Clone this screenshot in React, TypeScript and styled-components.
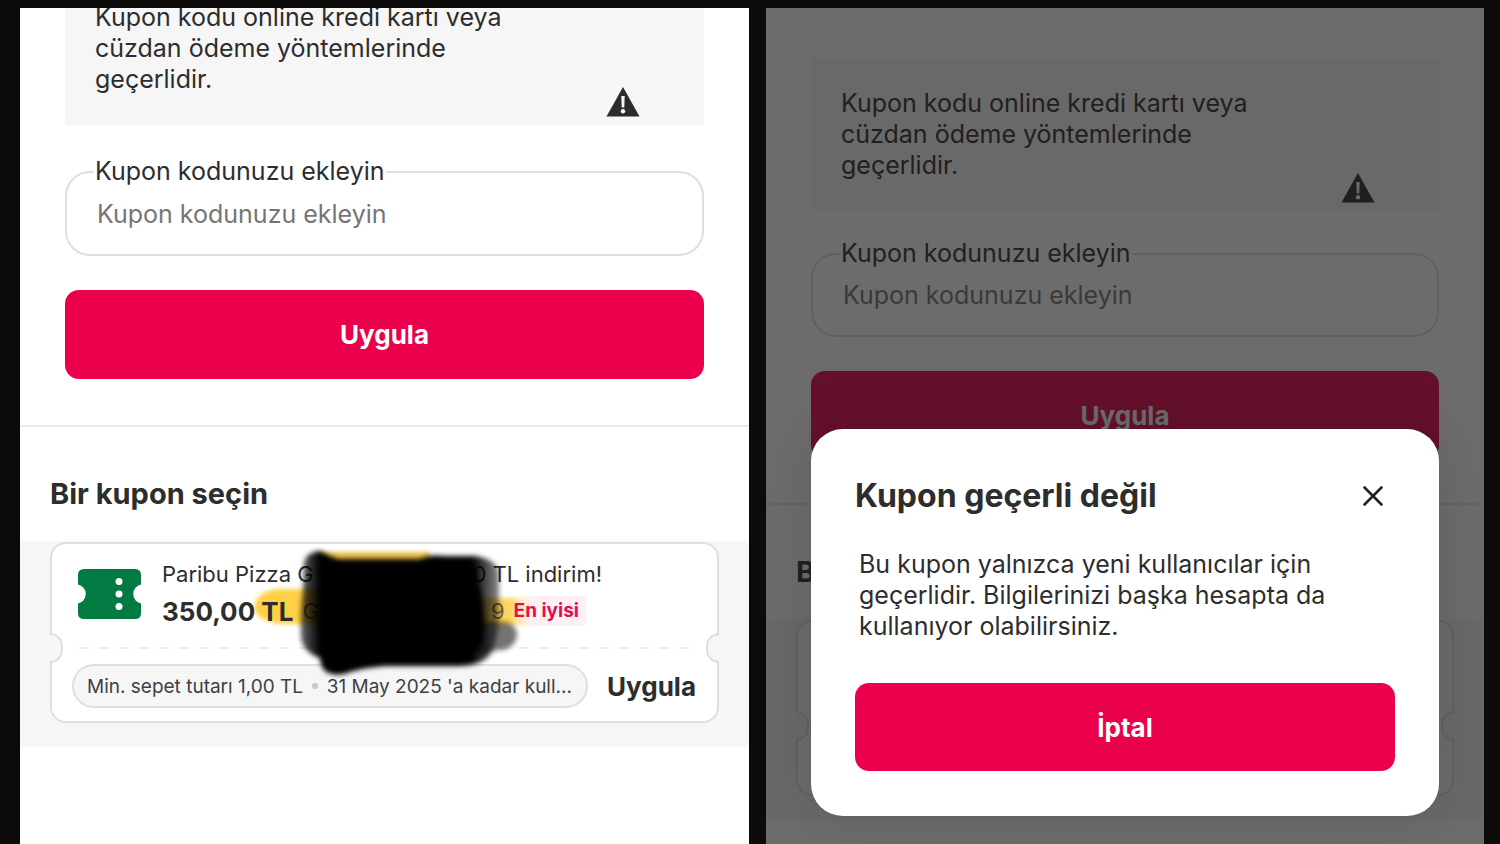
import React, { useId } from 'react';
import styled, { createGlobalStyle, ThemeProvider } from 'styled-components';

const GlobalStyle = createGlobalStyle`
  * { box-sizing: border-box; }
  body {
    margin: 0;
    background: #0c0b09;
    color: #2d2d2d;
    font-family: Inter, "Noto Sans", sans-serif;
  }
  button, input { font-family: inherit; }
  h2, p { margin: 0; }
`;

const regular = {
  noticeOffset: -36,
  noticeGap: 46,
  field: 85,
  fieldGap: 34,
  button: 89,
  sectionGap: 46,
  ticket: 181,
};

const compact = {
  noticeOffset: 50,
  noticeGap: 42,
  field: 84,
  fieldGap: 34,
  button: 88,
  sectionGap: 44,
  ticket: 176,
};

type Sizes = typeof regular;
const size = (key: keyof Sizes) => (p: { theme: any }) => `${p.theme[key]}px`;

const Stage = styled.main`
  display: grid;
  grid-template-columns: 729fr 718fr;
  gap: 17px;
  min-height: 100vh;
  padding: 8px 16px 0 20px;
`;

const Screen = styled.section`
  position: relative;
  overflow: hidden;
  background: #fff;
`;

const Form = styled.form`
  display: flex;
  flex-direction: column;
  padding: 0 45px ${size('sectionGap')};
  border-bottom: 2px solid #ebebeb;
`;

const Notice = styled.div`
  display: flex;
  align-items: flex-end;
  justify-content: space-between;
  margin-top: ${size('noticeOffset')};
  padding: 30px 64px 8px 30px;
  background: #f6f6f6;
`;

const NoticeText = styled.p`
  max-width: 430px;
  padding-bottom: 22px;
  font-size: 25px;
  line-height: 31px;
`;

const Field = styled.div`
  position: relative;
  margin-top: ${size('noticeGap')};
`;

const FieldLabel = styled.label`
  position: absolute;
  top: -15px;
  left: 29px;
  padding: 0 1px;
  background: #fff;
  font-size: 25px;
  line-height: 30px;
`;

const TextInput = styled.input`
  display: block;
  width: 100%;
  height: ${size('field')};
  padding: 0 30px;
  border: 2px solid #dedede;
  border-radius: 25px;
  background: #fff;
  font-size: 25px;
  &::placeholder { color: #757575; opacity: 1; }
`;

const PrimaryButton = styled.button`
  width: 100%;
  height: ${size('button')};
  padding: 0;
  border: 0;
  border-radius: 14px;
  background: #eb004b;
  color: #fff;
  font-size: 26px;
  font-weight: 700;
`;

const SubmitButton = styled(PrimaryButton)`
  margin-top: ${size('fieldGap')};
`;

const SectionTitle = styled.h2`
  padding: 50px 30px 30px;
  font-size: 29px;
  font-weight: 700;
  line-height: 34px;
`;

const TicketStrip = styled.div`
  padding: 1px 30px 24px;
  background: #f6f6f6;
`;

const Ticket = styled.article`
  position: relative;
  min-height: ${size('ticket')};
  border: 2px solid #dfdfdf;
  border-radius: 16px;
  background: #fff;
`;

const Notch = styled.span<{ $side: 'left' | 'right' }>`
  position: absolute;
  top: 89px;
  ${(p) => p.$side}: -2px;
  width: 13px;
  height: 30px;
  border: 2px solid #dfdfdf;
  border-${(p) => p.$side}: 0;
  border-radius: ${(p) => (p.$side === 'left' ? '0 15px 15px 0' : '15px 0 0 15px')};
  background: #f6f6f6;
`;

const Offer = styled.div`
  display: flex;
  gap: 21px;
  padding: 13px 25px 19px;
`;

const TicketIcon = styled.svg`
  flex: none;
  width: 64px;
  height: 50px;
  margin-top: 12px;
`;

const OfferText = styled.div`
  position: relative;
  z-index: 0;
  display: flex;
  flex-direction: column;
  gap: 3px;
  width: 440px;
`;

const OfferRow = styled.div`
  display: flex;
  align-items: center;
  justify-content: space-between;
  height: 34px;
  font-size: 22px;
  white-space: nowrap;
`;

const Group = styled.span`
  display: flex;
  align-items: center;
  gap: 9px;
`;

const Price = styled.strong`
  font-size: 26px;
  font-weight: 700;
`;

const Muted = styled.span`
  color: #6b6144;
`;

const BestTag = styled.strong`
  margin-right: 16px;
  padding: 4px 7px 4px 0;
  border-radius: 4px;
  background: linear-gradient(90deg, transparent, #fff0f5 30%);
  color: #e2104e;
  font-size: 19px;
  font-weight: 700;
  line-height: 22px;
`;

const MarkLayer = styled.svg<{ $layer: number }>`
  position: absolute;
  z-index: ${(p) => p.$layer};
  top: 0;
  left: 0;
  width: 500px;
  height: 140px;
  pointer-events: none;
`;

const Perforation = styled.div`
  height: 2px;
  margin: 0 27px;
  background: repeating-linear-gradient(90deg, #ededed 0 10px, transparent 10px 20px);
`;

const TicketFooter = styled.div`
  display: flex;
  align-items: center;
  justify-content: space-between;
  padding: 15px 21px 13px 20px;
`;

const Terms = styled.p`
  display: flex;
  align-items: center;
  justify-content: space-between;
  width: 516px;
  height: 44px;
  padding: 0 14px 0 13px;
  border: 2px solid #dfdfdf;
  border-radius: 22px;
  background: #f6f6f6;
  color: #404040;
  font-size: 19px;
  white-space: nowrap;
`;

const Dot = styled.i`
  width: 6px;
  height: 6px;
  border-radius: 50%;
  background: #c9c9c9;
`;

const TextButton = styled.button`
  padding: 0;
  border: 0;
  background: none;
  color: #2d2d2d;
  font-size: 26px;
  font-weight: 700;
`;

const Overlay = styled.div`
  position: absolute;
  inset: 0;
  display: flex;
  align-items: flex-end;
  padding: 0 45px 28px;
  background: rgba(25, 25, 25, 0.64);
`;

const Dialog = styled.div`
  flex: 1;
  padding: 45px 44px;
  border-radius: 32px;
  background: #fff;
  box-shadow: 0 0 60px rgba(0, 0, 0, 0.12);
`;

const DialogHeader = styled.header`
  display: flex;
  align-items: center;
  justify-content: space-between;
  padding-right: 11px;
`;

const DialogTitle = styled.h2`
  font-size: 32px;
  font-weight: 700;
  line-height: 44px;
`;

const CloseButton = styled.button`
  display: flex;
  padding: 0;
  border: 0;
  background: none;
  color: #222;
`;

const DialogText = styled.p`
  max-width: 490px;
  padding: 31px 0 41px 4px;
  font-size: 25px;
  line-height: 31px;
`;

function WarningIcon() {
  return (
    <svg width="34" height="30" viewBox="0 0 34 30" aria-hidden="true">
      <path d="M17 0 33.500 29.500H.5Z" fill="#2b2b2b" />
      <path d="M15.300 9h3.400l-.4 11.500h-2.600Z" fill="#f6f6f6" />
      <circle cx="17" cy="24.200" r="2.200" fill="#f6f6f6" />
    </svg>
  );
}

function CouponIcon() {
  return (
    <TicketIcon viewBox="0 0 64 50" aria-hidden="true">
      <path
        d="M7 0H58Q64 0 64 6V15.500A9.700 9.700 0 0 0 64 34.500V44Q64 50 58 50H7Q1 50 1 44V34.500A9.700 9.700 0 0 0 1 15.500V6Q1 0 7 0Z"
        fill="#027a42"
      />
      <circle cx="42" cy="12.500" r="3.500" fill="#fff" />
      <circle cx="42" cy="25" r="3.500" fill="#fff" />
      <circle cx="42" cy="37.500" r="3.500" fill="#fff" />
    </TicketIcon>
  );
}

function Highlighter() {
  return (
    <MarkLayer $layer={-1} viewBox="162 557 500 140" overflow="visible" aria-hidden="true">
      <defs>
        <filter id="soft-yellow" x="-20%" y="-50%" width="140%" height="200%">
          <feGaussianBlur stdDeviation="2" />
        </filter>
        <linearGradient id="yellow-fade" gradientUnits="userSpaceOnUse" x1="508" x2="540" y1="0" y2="0">
          <stop offset="0" stopColor="#ffd35a" />
          <stop offset="1" stopColor="#ffd35a" stopOpacity="0" />
        </linearGradient>
      </defs>
      <g filter="url(#soft-yellow)">
        <path d="M254 607Q257 590 280 589H330V624H285Q256 622 254 607Z" fill="#ffd044" />
        <path d="M318 552H430V575H318Z" fill="#e8c04a" />
        <path d="M400 598H545V625H400Z" fill="url(#yellow-fade)" />
      </g>
    </MarkLayer>
  );
}

function Scribble() {
  return (
    <MarkLayer $layer={1} viewBox="162 557 500 140" overflow="visible" aria-hidden="true">
      <defs>
        <filter id="soft-black" x="-20%" y="-20%" width="140%" height="140%">
          <feGaussianBlur stdDeviation="2.500" />
        </filter>
        <linearGradient id="black-fade" gradientUnits="userSpaceOnUse" x1="300" x2="502" y1="0" y2="0">
          <stop offset="0" stopColor="#000" stopOpacity="0.6" />
          <stop offset="0.1" stopColor="#000" />
          <stop offset="0.85" stopColor="#000" />
          <stop offset="1" stopColor="#000" stopOpacity="0.4" />
        </linearGradient>
      </defs>
      <g filter="url(#soft-black)">
        <path
          d="M304 563Q306 552 320 551Q329 556 338 559H420Q430 554 445 556H475Q496 559 499 572V618Q498 640 490 655Q482 665 460 666H385Q362 668 350 672Q336 678 325 671Q320 665 320 658Q303 652 301 638Q300 610 303 590Z"
          fill="url(#black-fade)"
        />
        <path d="M320 565H474Q486 600 484 640Q474 662 450 663H345Q330 665 328 652Q318 645 318 630Z" fill="#000" />
        <path d="M470 622H505Q517 624 517 636Q514 650 498 650L480 656Z" fill="#000" opacity="0.55" />
      </g>
    </MarkLayer>
  );
}

function CouponForm() {
  const id = useId();
  return (
    <Form onSubmit={(e) => e.preventDefault()}>
      <Notice>
        <NoticeText>Kupon kodu online kredi kartı veya cüzdan ödeme yöntemlerinde geçerlidir.</NoticeText>
        <WarningIcon />
      </Notice>
      <Field>
        <TextInput id={id} placeholder="Kupon kodunuzu ekleyin" />
        <FieldLabel htmlFor={id}>Kupon kodunuzu ekleyin</FieldLabel>
      </Field>
      <SubmitButton type="submit">Uygula</SubmitButton>
    </Form>
  );
}

function CouponTicket({ children }: { children?: React.ReactNode }) {
  return (
    <TicketStrip>
      <Ticket>
        {children}
        <Notch $side="left" />
        <Notch $side="right" />
      </Ticket>
    </TicketStrip>
  );
}

export default function App() {
  return (
    <>
      <GlobalStyle />
      <Stage>
        <ThemeProvider theme={regular}>
          <Screen>
            <CouponForm />
            <SectionTitle>Bir kupon seçin</SectionTitle>
            <CouponTicket>
              <Offer>
                <CouponIcon />
                <OfferText>
                  <Highlighter />
                  <OfferRow>
                    <span>Paribu Pizza G</span>
                    <span>0 TL indirim!</span>
                  </OfferRow>
                  <OfferRow>
                    <Group>
                      <Price>350,00 TL</Price>
                      <Muted>G</Muted>
                    </Group>
                    <Group>
                      <Muted>9</Muted>
                      <BestTag>En iyisi</BestTag>
                    </Group>
                  </OfferRow>
                  <Scribble />
                </OfferText>
              </Offer>
              <Perforation />
              <TicketFooter>
                <Terms>
                  <span>Min. sepet tutarı 1,00 TL</span>
                  <Dot />
                  <span>31 May 2025 'a kadar kull...</span>
                </Terms>
                <TextButton type="button">Uygula</TextButton>
              </TicketFooter>
            </CouponTicket>
          </Screen>
        </ThemeProvider>
        <ThemeProvider theme={compact}>
          <Screen>
            <CouponForm />
            <SectionTitle>Bir kupon seçin</SectionTitle>
            <CouponTicket />
            <Overlay>
              <Dialog role="dialog" aria-labelledby="dialog-title">
                <DialogHeader>
                  <DialogTitle id="dialog-title">Kupon geçerli değil</DialogTitle>
                  <CloseButton type="button" aria-label="Kapat">
                    <svg width="22" height="22" viewBox="0 0 22 22" aria-hidden="true">
                      <path d="M2.500 2.500 19.500 19.500M19.500 2.500 2.500 19.500" stroke="currentColor" strokeWidth="2.600" strokeLinecap="round" />
                    </svg>
                  </CloseButton>
                </DialogHeader>
                <DialogText>
                  Bu kupon yalnızca yeni kullanıcılar için geçerlidir. Bilgilerinizi başka hesapta da kullanıyor
                  olabilirsiniz.
                </DialogText>
                <PrimaryButton type="button">İptal</PrimaryButton>
              </Dialog>
            </Overlay>
          </Screen>
        </ThemeProvider>
      </Stage>
    </>
  );
}
